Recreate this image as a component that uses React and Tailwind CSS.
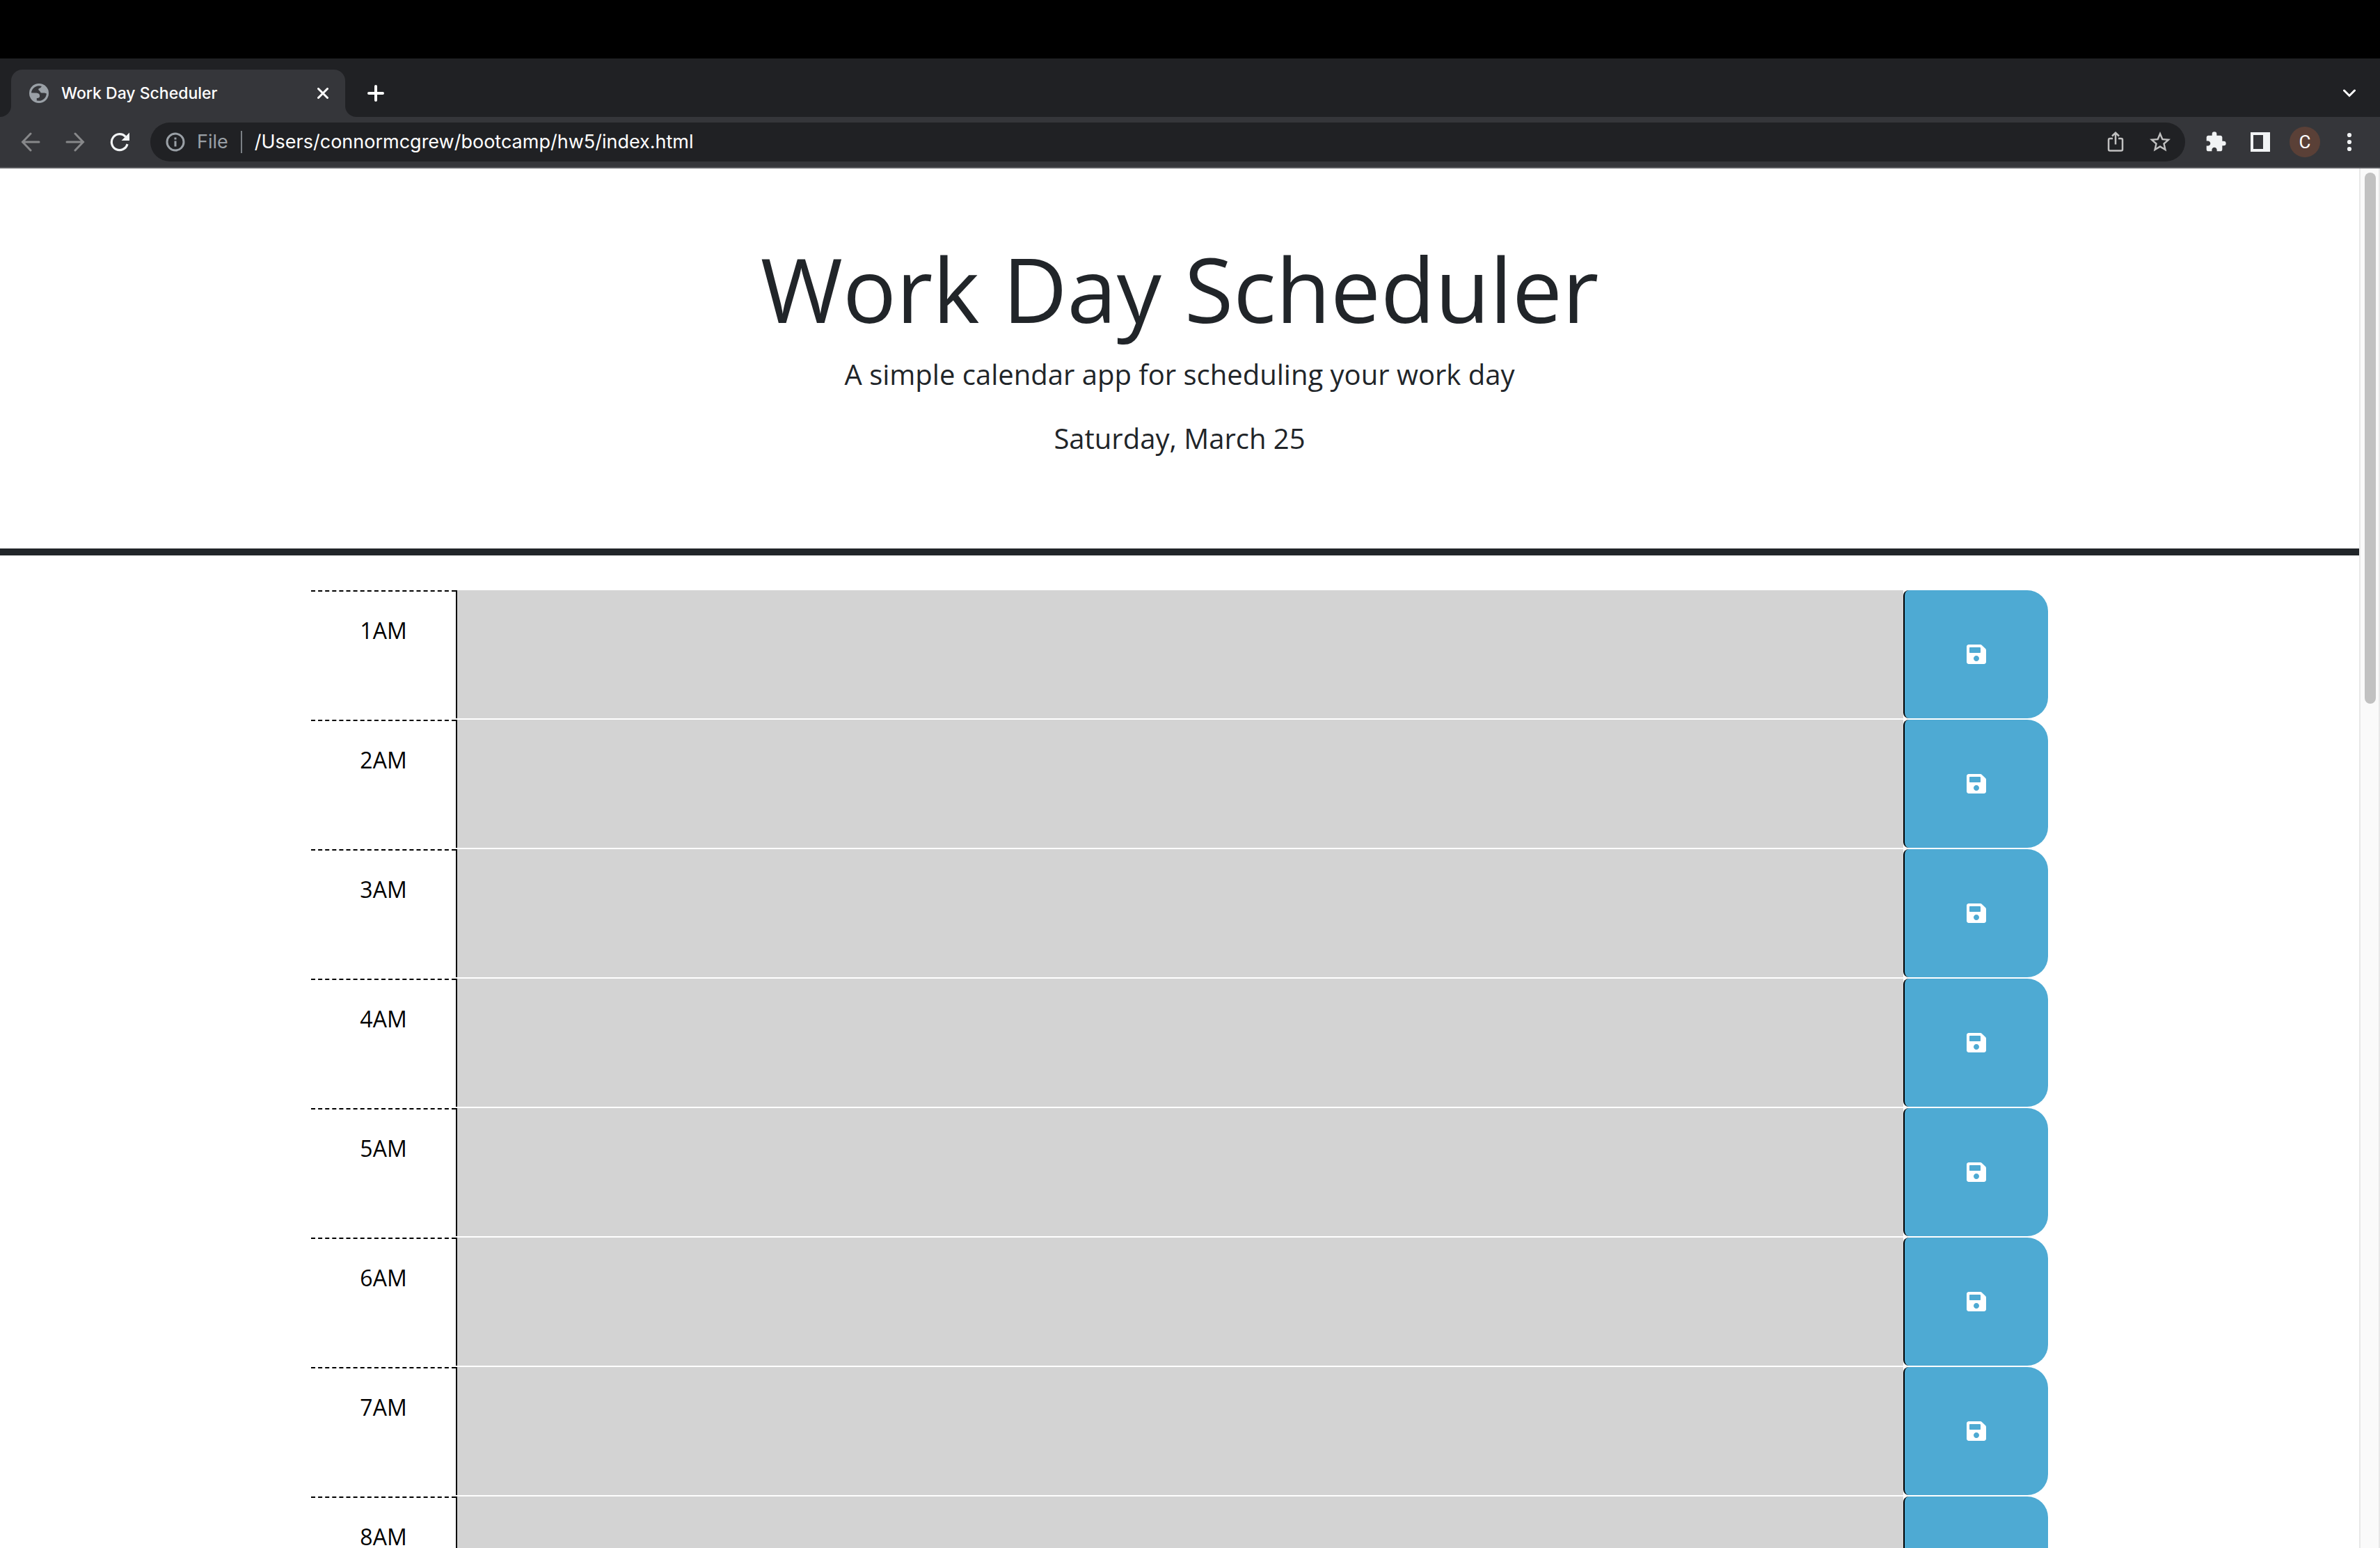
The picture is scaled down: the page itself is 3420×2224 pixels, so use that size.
import { FaSave } from "react-icons/fa";
import { MdExtension, MdStarBorder } from "react-icons/md";

const hours = ["1AM", "2AM", "3AM", "4AM", "5AM", "6AM", "7AM", "8AM"];

function Arrow({ flip }) {
  return (
    <svg
      viewBox="0 0 28 28"
      className={flip ? "size-7 rotate-180" : "size-7"}
      fill="none"
      stroke="#87888a"
      strokeWidth="3"
      strokeLinecap="round"
    >
      <path d="M14 2 L2.5 14 L14 26 M3 14 H26" />
    </svg>
  );
}

function Globe() {
  return (
    <svg viewBox="0 0 28 28" className="size-7">
      <circle cx="14" cy="14" r="14" fill="#9aa0a6" />
      <path
        fill="#35363a"
        d="M3 13.6 C3.2 8 8 3.4 14 3.2 L17.6 3.8 C17.8 6.6 13.2 6.4 13.2 8.6 C13.2 10.4 15.6 10 16 12.6 C17.4 14.6 21.6 12.4 24.8 14.4 C24.6 20 20 24.8 14 24.8 L10.8 24.4 V21 C13.4 21.2 15 20.4 15 18 C15 15 12.6 13.8 10 13.8 Z"
      />
      <path fill="#9aa0a6" d="M3 13.8 H10 C12.6 13.8 15 15 15 18 V19 H11 C9.6 19 10 17.4 8.6 17.2 C6 17.2 4 16 3 13.8 Z" />
    </svg>
  );
}

function TabStrip() {
  return (
    <div className="flex h-[84px] items-end bg-[#202124] pr-7">
      <div className="size-4 overflow-hidden bg-[#35363a]">
        <div className="size-4 rounded-br-2xl bg-[#202124]" />
      </div>
      <div className="flex h-[68px] w-[480px] items-center rounded-t-2xl bg-[#35363a] pr-5 pl-[26px]">
        <Globe />
        <span className="ml-[18px] flex-1 text-[23px] leading-8 font-medium text-white">
          Work Day Scheduler
        </span>
        <button aria-label="Close tab" className="flex size-6 items-center justify-center">
          <svg viewBox="0 0 16 16" className="size-4" stroke="#fff" strokeWidth="3" strokeLinecap="round">
            <path d="M1.5 1.5 L14.5 14.5 M14.5 1.5 L1.5 14.5" />
          </svg>
        </button>
      </div>
      <div className="size-4 overflow-hidden bg-[#35363a]">
        <div className="size-4 rounded-bl-2xl bg-[#202124]" />
      </div>
      <button aria-label="New tab" className="ml-4 flex h-[68px] items-center">
        <svg viewBox="0 0 24 24" className="size-6" stroke="#fff" strokeWidth="4" strokeLinecap="round">
          <path d="M12 2 V22 M2 12 H22" />
        </svg>
      </button>
      <button aria-label="Search tabs" className="ml-auto flex h-[68px] w-8 items-center justify-center">
        <svg viewBox="0 0 18 12" className="h-3 w-[18px]" fill="none" stroke="#fff" strokeWidth="3" strokeLinecap="round">
          <path d="M1.5 2 L9 9.5 L16.5 2" />
        </svg>
      </button>
    </div>
  );
}

function Toolbar() {
  return (
    <div className="flex h-[74px] items-center border-b-2 border-[#5b5c60] bg-[#35363a] pr-7 pl-[30px]">
      <button aria-label="Back"><Arrow /></button>
      <button aria-label="Forward" className="ml-9"><Arrow flip /></button>
      <button aria-label="Reload" className="ml-9">
        <svg viewBox="0 0 28 28" className="size-7">
          <path d="M22.5 6.5 A11.5 11.5 0 1 0 25 17" fill="none" stroke="#f1f3f4" strokeWidth="3.2" />
          <path d="M28 0.5 V12 H16.5 Z" fill="#f1f3f4" />
        </svg>
      </button>
      <div className="ml-[30px] flex h-14 flex-1 items-center rounded-full bg-[#202124] pr-[18px] pl-[22px]">
        <svg viewBox="0 0 28 28" className="size-7" fill="none" stroke="#9aa0a6" strokeWidth="3">
          <circle cx="14" cy="14" r="12" />
          <path d="M14 12.5 V20.5 M14 7.5 V10.5" />
        </svg>
        <span className="ml-[17px] text-[27px] leading-9 text-[#9aa0a6]">File</span>
        <span className="mx-[18px] h-8 w-0.5 bg-[#7b8085]" />
        <input
          aria-label="Address"
          defaultValue="/Users/connormcgrew/bootcamp/hw5/index.html"
          className="min-w-0 flex-1 bg-transparent text-[27px] leading-9 text-white outline-none"
        />
        <button aria-label="Share">
          <svg viewBox="0 0 24 30" className="h-[30px] w-6" fill="none" stroke="#c0c0c0" strokeWidth="2.5">
            <path d="M8 10 H4 Q2 10 2 12 V25.5 Q2 27.5 4 27.5 H20 Q22 27.5 22 25.5 V12 Q22 10 20 10 H16 M12 18.5 V2.5 M7 6.5 L12 1.8 L17 6.5" />
          </svg>
        </button>
        <button aria-label="Bookmark" className="ml-[34px]">
          <MdStarBorder className="size-9 text-[#c0c0c0]" />
        </button>
      </div>
      <button aria-label="Extensions" className="ml-7">
        <MdExtension className="size-8 text-[#f1f3f4]" />
      </button>
      <button aria-label="Side panel" className="ml-[34px]">
        <svg viewBox="0 0 28 28" className="size-7">
          <path fill="#f1f3f4" fillRule="evenodd" d="M0 0 H28 V28 H0 Z M4 4 V24 H18 V4 Z" />
        </svg>
      </button>
      <button
        aria-label="Profile"
        className="ml-7 flex size-11 items-center justify-center rounded-full bg-[#5a4037] font-['Roboto'] text-[26px] leading-8 text-white"
      >
        C
      </button>
      <button aria-label="Menu" className="ml-[26px] flex w-8 justify-center">
        <svg viewBox="0 0 6 28" className="h-7 w-1.5 overflow-visible" fill="#f1f3f4">
          <circle cx="3" cy="4" r="3.1" />
          <circle cx="3" cy="14" r="3.1" />
          <circle cx="3" cy="24" r="3.1" />
        </svg>
      </button>
    </div>
  );
}

function TimeBlock({ hour }) {
  return (
    <div className="mb-0.5 grid h-[184px] grid-cols-12">
      <label
        htmlFor={hour}
        className="border-t-2 border-dashed border-black py-8 text-center text-[32px] leading-[48px] text-black"
      >
        {hour}
      </label>
      <textarea
        id={hour}
        className="col-span-10 h-full w-full resize-none border-l-2 border-black bg-[#d3d3d3] px-6 py-3 text-[32px] leading-[48px] outline-none"
      />
      <button
        aria-label={"Save " + hour}
        className="flex h-full w-full items-center justify-center rounded-l-lg rounded-r-[30px] border-l-2 border-black bg-[#4eaad3] text-white"
      >
        <FaSave className="size-8" />
      </button>
    </div>
  );
}

export default function App() {
  return (
    <div className="flex h-screen flex-col overflow-hidden bg-white">
      <div className="h-[84px] shrink-0 bg-black" />
      <div className="shrink-0 font-['Inter',sans-serif]">
        <TabStrip />
        <Toolbar />
      </div>
      <div className="flex min-h-0 flex-1">
        <main className="min-w-0 flex-1 overflow-hidden font-['Open_Sans',sans-serif] text-[#212529]">
          <header className="border-b-[10px] border-[#212529] px-24 pt-24 pb-32 text-center">
            <h1 className="mb-4 text-[128px] leading-[154px]">Work Day Scheduler</h1>
            <p className="mb-8 text-[40px] leading-[60px]">A simple calendar app for scheduling your work day</p>
            <p className="text-[40px] leading-[60px]">Saturday, March 25</p>
          </header>
          <div className="mx-auto max-w-[2496px] pt-[50px]">
            {hours.map((hour) => (
              <TimeBlock key={hour} hour={hour} />
            ))}
          </div>
        </main>
        <div className="w-[30px] border-x-2 border-[#e8e8e8] bg-[#fafafa] pt-1.5 pl-1.5">
          <div className="h-[763px] w-4 rounded-full bg-[#c1c1c1]" />
        </div>
      </div>
    </div>
  );
}
